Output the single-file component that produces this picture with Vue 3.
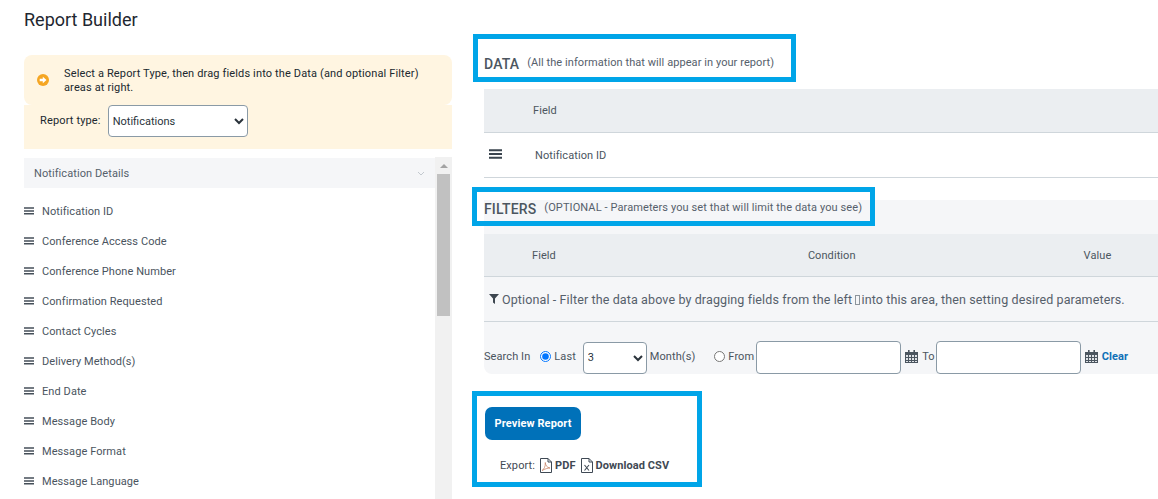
<script setup>
const fields = ['Notification ID','Conference Access Code','Conference Phone Number','Confirmation Requested','Contact Cycles','Delivery Method(s)','End Date','Message Body','Message Format','Message Language']
</script>

<template>
  <div class="page">
    <section class="left">
      <h1 class="title">Report Builder</h1>
      <div class="alert">
        <svg class="arrow" viewBox="0 0 12 12"><circle cx="6" cy="6" r="6" fill="#f5a623"/><path d="M2.700 4.800h3.100V2.700L9.500 6 5.800 9.300V7.200H2.700z" fill="#fff"/></svg>
        <p>Select a Report Type, then drag fields into the Data (and optional Filter) areas at right.</p>
      </div>
      <div class="type-row">
        <label for="rt">Report type:</label>
        <select id="rt" class="sel type-sel"><option>Notifications</option></select>
      </div>
      <div class="panel">
        <div class="panel-main">
          <div class="acc-head">
            <span>Notification Details</span>
            <svg class="chev" viewBox="0 0 8 5"><path d="M1 1l3 3 3-3" fill="none" stroke="#c3c9cf" stroke-width="1"/></svg>
          </div>
          <ul class="fields">
            <li v-for="f in fields" :key="f">
              <svg class="bars" viewBox="0 0 10 8"><path d="M0 .3h10v1.500H0zM0 3.200h10v1.500H0zM0 6.100h10v1.500H0z" fill="#454f59"/></svg>
              {{ f }}
            </li>
          </ul>
        </div>
        <div class="scrollbar">
          <svg class="up" viewBox="0 0 8 4"><path d="M4 0l4 4H0z" fill="#a3a3a3"/></svg>
          <div class="thumb"></div>
        </div>
      </div>
    </section>

    <section class="right">
      <div class="head data-head">
        <strong>DATA</strong>
        <span>(All the information that will appear in your report)</span>
      </div>
      <div class="thead data-th"><span>Field</span></div>
      <div class="drow">
        <svg class="bars big" viewBox="0 0 13 10"><path d="M0 .3h13v2H0zM0 4h13v2H0zM0 7.700h13v2H0z" fill="#3a444e"/></svg>
        <span>Notification ID</span>
      </div>

      <div class="filters">
        <div class="head filter-head">
          <strong>FILTERS</strong>
          <span>(OPTIONAL - Parameters you set that will limit the data you see)</span>
        </div>
        <div class="thead filter-th">
          <span>Field</span><span>Condition</span><span>Value</span>
        </div>
        <div class="hint">
          <svg class="funnel" viewBox="0 0 10 10"><path d="M0 0h10L6 4.600V10L4 8.400V4.600z" fill="#3d4650"/></svg>
          <span>Optional - Filter the data above by dragging fields from the left <i class="tofu"></i>into this area, then setting desired parameters.</span>
        </div>
        <div class="search">
          <span class="s-label lift">Search In</span>
          <label class="radio lift"><input type="radio" name="r" checked>Last</label>
          <select class="sel num-sel"><option>3</option></select>
          <span class="months lift">Month(s)</span>
          <label class="radio from lift"><input type="radio" name="r">From</label>
          <input class="date first" type="text">
          <svg class="cal lift" viewBox="0 0 13 13"><path d="M0 2h13v11H0z" fill="#4b555f"/><path d="M1 5h2v2H1zM4 5h2v2H4zM7 5h2v2H7zM10 5h2v2h-2zM1 8h2v2H1zM4 8h2v2H4zM7 8h2v2H7zM10 8h2v2h-2zM1 11h2v1H1zM4 11h2v1H4zM7 11h2v1H7zM10 11h2v1h-2z" fill="#dfe3e7"/><path d="M3 0h1.600v3.400H3zM8.400 0H10v3.400H8.400z" fill="#4b555f"/></svg>
          <span class="to lift">To</span>
          <input class="date" type="text">
          <svg class="cal lift" viewBox="0 0 13 13"><path d="M0 2h13v11H0z" fill="#4b555f"/><path d="M1 5h2v2H1zM4 5h2v2H4zM7 5h2v2H7zM10 5h2v2h-2zM1 8h2v2H1zM4 8h2v2H4zM7 8h2v2H7zM10 8h2v2h-2zM1 11h2v1H1zM4 11h2v1H4zM7 11h2v1H7zM10 11h2v1h-2z" fill="#dfe3e7"/><path d="M3 0h1.600v3.400H3zM8.400 0H10v3.400H8.400z" fill="#4b555f"/></svg>
          <a class="clear lift">Clear</a>
        </div>
      </div>

      <button class="preview">Preview Report</button>
      <div class="export">
        <span>Export:</span>
        <a>
          <svg class="file" viewBox="0 0 12 15"><path d="M.5.5h7.500l3.500 3.500v10.500H.5z M8 .5V4h3.500" fill="#fff" stroke="#3f4954"/><path d="M2 12.500c2-1 3.500-4 3.300-8 .3 3 1.500 5 4.700 5.500-2.500 0-5 1-8 2.500z" fill="none" stroke="#c9866a" stroke-width=".8"/></svg>
          PDF
        </a>
        <a>
          <svg class="file" viewBox="0 0 12 15"><path d="M.5.5h7.500l3.500 3.500v10.500H.5z M8 .5V4h3.500" fill="#fff" stroke="#3f4954"/><path d="M3.500 7l4.500 5.500M8 7l-4.500 5.500" stroke="#3f4954" stroke-width="1.100"/></svg>
          Download CSV
        </a>
      </div>
    </section>

    <div class="mark mark-data"></div>
    <div class="mark mark-filter"></div>
    <div class="mark mark-preview"></div>
  </div>
</template>

<style>
html, body { margin: 0; background: #fff; overflow: hidden; }
</style>

<style scoped>
.page {
  position: relative;
  width: 1158px;
  height: 499px;
  overflow: hidden;
  display: flex;
  font-family: Roboto, "Liberation Sans", sans-serif;
  color: #3f4954;
  font-size: 11px;
  letter-spacing: .08px;
}
.left { width: 428px; margin-left: 24px; flex: none; }
.right { width: 674px; margin-left: 32px; flex: none; }
.title { margin: 9px 0 24px; font-size: 18px; line-height: 22px; font-weight: 400; letter-spacing: 0; color: #1f2730; }
.alert {
  height: 50px; box-sizing: border-box; background: #fff5e1;
  border-radius: 8px; display: flex; align-items: center;
  padding: 2px 24px 0 13px;
}
.arrow { width: 12px; height: 12px; flex: none; margin: -2px 15px 0 0; }
.alert p { margin: 0; font-size: 11px; line-height: 14px; letter-spacing: .14px; color: #20282f; }
.type-row {
  height: 44px; box-sizing: border-box; background: #fff5e1; display: flex; align-items: flex-start;
  padding: 0 0 0 16px; gap: 7px; color: #20282f;
}
.type-row label { line-height: 31px; letter-spacing: .15px; }
.sel {
  font-family: inherit; font-size: 11px; color: #2a333b; background: #fff;
  border: 1px solid #8a9aa6; border-radius: 4px; padding: 0; box-sizing: border-box;
}
.type-sel { width: 140px; height: 32px; }
.panel { margin-top: 8px; display: flex; height: 342px; }
.panel-main { width: 411px; flex: none; }
.acc-head {
  margin-top: 1px; height: 30px; background: #f5f6f8; display: flex; align-items: center; justify-content: space-between;
  padding: 0 10px; color: #55606b;
}
.chev { width: 8px; height: 5px; }
.fields { list-style: none; margin: 8px 0 0; padding: 0; }
.fields li { height: 30px; display: flex; align-items: center; color: #4a545e; }
.bars { width: 10px; height: 8px; margin-right: 8px; flex: none; }
.scrollbar { width: 17px; flex: none; background: #f1f1f1; }
.up { display: block; width: 8px; height: 4px; margin: 7px 0 0 4.500px; }
.thumb { width: 13px; height: 142px; margin: 6px 0 0 2px; background: #c1c1c1; }

.head { display: flex; align-items: center; }
.head strong { font-size: 14px; font-weight: 500; letter-spacing: .15px; color: #4c5660; margin-right: 8px; }
.head span { font-size: 11px; letter-spacing: .1px; color: #55606b; margin-bottom: 3px; }
.data-head { height: 89px; padding-top: 46px; box-sizing: border-box; align-items: flex-start; }
.data-head strong { line-height: 36px; }
.data-head span { line-height: 34px; letter-spacing: .07px; }
.thead { background: #ebeef1; border-bottom: 1px solid #cfd6db; display: flex; align-items: center; box-sizing: border-box; color: #4c5660; }
.data-th { height: 44px; padding-left: 49px; }
.drow { height: 45px; box-sizing: border-box; border-bottom: 1px solid #cfd6db; display: flex; align-items: center; padding-left: 5px; color: #4a545e; }
.bars.big { width: 13px; height: 10px; margin-right: 33px; margin-top: -2px; }
.filters { margin-top: 22px; height: 174px; background: #f5f6f8; border-radius: 0 0 0 8px; }
.filter-head { height: 34px; line-height: 18px; padding-bottom: 16px; box-sizing: border-box; }
.filter-th { height: 43px; padding-left: 48px; }
.filter-th span:nth-child(2) { margin-left: 252px; }
.filter-th span:nth-child(3) { margin-left: 228px; }
.hint { height: 45px; box-sizing: border-box; border-bottom: 1px solid #cfd6db; display: flex; align-items: center; padding-left: 5px; font-size: 12.500px; letter-spacing: .12px; color: #55606b; gap: 3px; }
.funnel { width: 10px; height: 10px; flex: none; }
.tofu { display: inline-block; width: 3px; height: 8px; border: 1px solid #8d959c; margin: 0 1px 0 0; vertical-align: -1px; }
.search { height: 52px; padding-top: 19px; box-sizing: border-box; display: flex; align-items: center; color: #4a545e; }
.lift { margin-bottom: 3px; }
.s-label { margin-right: 10px; }
.radio { display: flex; align-items: center; gap: 3px; }
.radio input { margin: 0; width: 11px; height: 11px; }
.num-sel { width: 64px; height: 32px; margin-left: 7px; }
.months { margin-left: 3px; }
.radio.from { margin-left: 19px; }
.date { width: 145px; height: 33px; margin-left: 1px; box-sizing: border-box; border: 1px solid #8a9aa6; border-radius: 4px; background: #fff; padding: 0; }
.date.first { margin-left: 2px; }
.cal { width: 13px; height: 13px; margin-left: 4px; flex: none; }
.to { margin-left: 4px; }
.clear { color: #0f70b7; font-weight: 700; margin-left: 4px; }
.preview {
  display: block; margin: 33px 0 0 1px; width: 96px; height: 33px; border: 0; border-radius: 7px;
  background: #0071b9; color: #fff; font-family: inherit; font-size: 11px; font-weight: 700; letter-spacing: .1px; padding: 0;
}
.export { display: flex; align-items: center; margin: 16px 0 0 16px; gap: 5px; color: #3f4954; height: 18px; }
.export a { display: flex; align-items: center; gap: 3px; font-weight: 700; }
.file { width: 12px; height: 15px; flex: none; }
.mark { position: absolute; border: 5px solid #00a5e8; box-sizing: border-box; pointer-events: none; }
.mark-data { left: 473px; top: 34px; width: 323px; height: 48px; }
.mark-filter { left: 472px; top: 187px; width: 403px; height: 39px; }
.mark-preview { left: 472px; top: 391px; width: 230px; height: 96px; }
</style>
